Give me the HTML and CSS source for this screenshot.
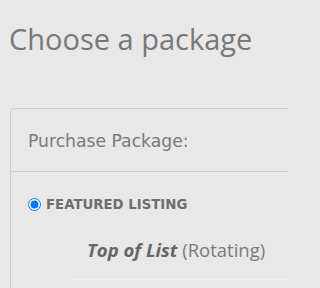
FILE: index.html
```html
<!DOCTYPE html>
<html>
<head>
<meta charset="utf-8">
<link rel="stylesheet" href="styles.css">
</head>
<body>
<div class="page">
  <h1 class="title">Choose a package</h1>
  <div class="card">
    <div class="card-header">Purchase Package:</div>
    <div class="card-body">
      <label class="option">
        <input type="radio" name="pkg" checked>
        <span class="option-name">FEATURED LISTING</span>
      </label>
      <div class="detail"><em class="detail-main">Top of List</em> (Rotating)</div>
      <div class="divider"></div>
    </div>
  </div>
</div>
</body>
</html>
```
FILE: styles.css
```css
html, body {
  margin: 0;
  padding: 0;
  background: #e8e8e8;
}
body {
  font-family: "Open Sans", "DejaVu Sans", sans-serif;
  color: #777;
}
.page {
  width: 288px;
  height: 288px;
  overflow: hidden;
}
.title {
  margin: 0;
  padding: 19px 0 0 9px;
  font-weight: 400;
  font-size: 29px;
  line-height: 40px;
  color: #787878;
  height: 89px;
  box-sizing: border-box;
}
.card {
  margin: 19px -40px 0 10px;
  border: 1px solid #cfcfcf;
  border-radius: 4px;
  height: 300px;
}
.card-header {
  height: 63px;
  box-sizing: border-box;
  padding: 21px 0 0 17px;
  font-family: "DejaVu Sans", sans-serif;
  font-size: 17.2px;
  line-height: 22px;
  color: #7a7a7a;
  border-bottom: 1px solid #cfcfcf;
}
.card-body {
  padding: 24px 0 0 17px;
}
.option {
  display: flex;
  align-items: center;
  gap: 5px;
  height: 16px;
}
.option input {
  margin: 0;
  width: 13px;
  height: 13px;
}
.option-name {
  font-family: "DejaVu Sans", sans-serif;
  font-weight: 700;
  font-size: 13.3px;
  color: #6e6e6e;
}
.detail {
  margin: 25px 0 0 59px;
  font-size: 18.5px;
  line-height: 25px;
  color: #7a7a7a;
}
.detail-main {
  font-weight: 700;
  color: #666;
}
.divider {
  margin: 17px 0 0 40px;
  border-top: 1px dotted #f4f4f4;
}
```
